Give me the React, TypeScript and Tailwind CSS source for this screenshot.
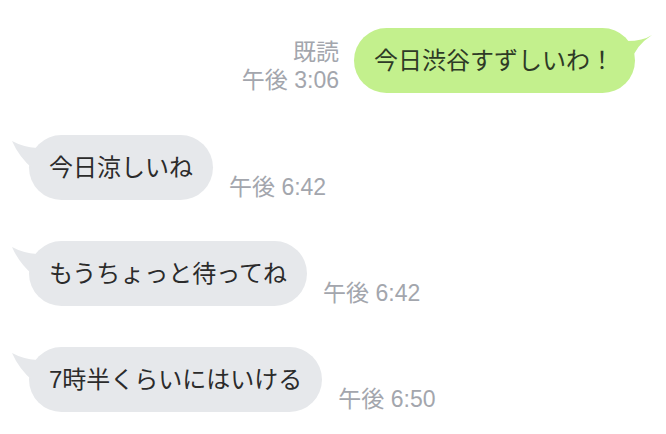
import React from 'react';

interface Message {
  id: number;
  text: string;
  time: string;
}

const received: Message[] = [
  { id: 1, text: '今日涼しいね', time: '午後 6:42' },
  { id: 2, text: 'もうちょっと待ってね', time: '午後 6:42' },
  { id: 3, text: '7時半くらいにはいける', time: '午後 6:50' },
];

function SentBubble({ text }: { text: string }) {
  return (
    <div className="relative h-[65px] rounded-full bg-[#c3f08d] pl-5 pr-[21px] flex items-center text-[24px] text-[#2e3a26] whitespace-nowrap">
      {/* tail */}
      <svg className="absolute right-[-18px] top-0" width="28" height="34" viewBox="0 0 28 34">
        <path d="M27 7 Q18 13 2 13 L-2 13 L-2 34 L6 34 Q10 18 27 7 Z" fill="#c3f08d" />
      </svg>
      <span className="relative">{text}</span>
    </div>
  );
}

function ReceivedBubble({ text }: { text: string }) {
  return (
    <div className="relative h-[65px] rounded-full bg-[#e6e8eb] px-5 flex items-center text-[24px] text-[#2b2b2b] whitespace-nowrap">
      {/* tail */}
      <svg className="absolute left-[-18px] top-0" width="34" height="34" viewBox="0 0 34 34">
        <path d="M1 6 Q12 12 26 13 L32 13 L32 34 L22 34 Q8 22 1 6 Z" fill="#e6e8eb" />
      </svg>
      <span className="relative">{text}</span>
    </div>
  );
}

export default function App() {
  return (
    <div className="w-[666px] h-[434px] bg-white overflow-hidden font-['Liberation_Sans','Noto_Sans_CJK_JP',sans-serif]">
      {/* sent */}
      <div className="flex justify-end items-end pr-[31px] pt-[28px]">
        <div className="flex flex-col items-end text-[23px] leading-[28px] text-[#a3a6ad] mr-[15px] mb-[-1px]">
          <span>既読</span>
          <span>午後 3:06</span>
        </div>
        <SentBubble text="今日渋谷すずしいわ！" />
      </div>

      {/* received */}
      <div className="flex flex-col gap-[41px] pl-[29px] mt-[42px]">
        {received.map((m) => (
          <div key={m.id} className="flex items-end gap-4">
            <ReceivedBubble text={m.text} />
            <span className="text-[23px] leading-none text-[#a3a6ad] mb-[1px]">{m.time}</span>
          </div>
        ))}
      </div>
    </div>
  );
}
